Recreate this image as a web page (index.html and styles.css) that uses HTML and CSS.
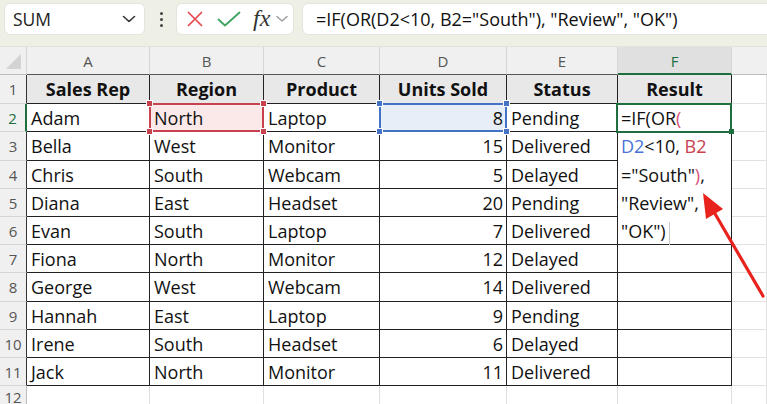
FILE: index.html
```html
<!DOCTYPE html>
<html>
<head>
<meta charset="utf-8">
<title>Sheet</title>
<link rel="stylesheet" href="styles.css">
</head>
<body>
<div class="app">
  <div class="toolbar">
    <div class="namebox">
      <span class="nb-text">SUM</span>
      <svg class="nb-chev" width="14" height="8" viewBox="0 0 14 8"><path d="M1.5 1.5 L7 6.5 L12.5 1.5" fill="none" stroke="#333" stroke-width="1.6" stroke-linecap="round" stroke-linejoin="round"/></svg>
    </div>
    <div class="kebab"><span></span><span></span><span></span></div>
    <div class="fbtns">
      <svg width="16" height="16" viewBox="0 0 16 16"><path d="M1.5 1.5 L14.5 14.5 M14.5 1.5 L1.5 14.5" stroke="#e5484d" stroke-width="1.7" stroke-linecap="round"/></svg>
      <svg width="24" height="16" viewBox="0 0 24 16"><path d="M1.5 8.5 L8 14.5 L22.5 1.5" fill="none" stroke="#3fa35f" stroke-width="1.8" stroke-linecap="round" stroke-linejoin="round"/></svg>
      <span class="fx">fx</span>
      <svg width="12" height="8" viewBox="0 0 12 8"><path d="M1 1.5 L6 6 L11 1.5" fill="none" stroke="#a0a0a0" stroke-width="1.5" stroke-linecap="round" stroke-linejoin="round"/></svg>
    </div>
    <div class="formula">=IF(OR(D2&lt;10, B2="South"), "Review", "OK")</div>
  </div>

  <div class="sheet">
    <div class="corner"></div>
    <div class="ch">A</div><div class="ch">B</div><div class="ch">C</div><div class="ch">D</div><div class="ch">E</div><div class="ch chf">F</div><div class="ch chg"></div>

    <div class="rh tb">1</div>
    <div class="c t hd">Sales Rep</div><div class="c t hd">Region</div><div class="c t hd">Product</div><div class="c t hd">Units Sold</div><div class="c t hd">Status</div><div class="c t hd">Result</div><div class="c"></div>

    <div class="rh tb rh-act">2</div>
    <div class="c t">Adam</div>
    <div class="c t sel sel-red">North<span class="mark"><i class="h tl"></i><i class="h tr"></i><i class="h bl"></i><i class="h br"></i></span></div>
    <div class="c t">Laptop</div>
    <div class="c t num sel sel-blue">8<span class="mark"><i class="h tl"></i><i class="h tr"></i><i class="h bl"></i><i class="h br"></i></span></div>
    <div class="c t">Pending</div>
    <div class="editor">
      <div class="ln l28">=IF(OR<span class="pk">(</span></div>
      <div class="ln l29"><span class="bl">D2</span>&lt;10, <span class="rd">B2</span></div>
      <div class="ln l28">="South"<span class="pk">)</span>,</div>
      <div class="ln l28">"Review",</div>
      <div class="ln l28">"OK")<span class="caret"></span></div>
      <span class="active"><i class="fill-h"></i></span>
    </div>
    <div class="c"></div>

    <div class="rh tb">3</div>
    <div class="c t">Bella</div><div class="c t">West</div><div class="c t">Monitor</div><div class="c t num">15</div><div class="c t">Delivered</div><div class="c"></div>

    <div class="rh tb">4</div>
    <div class="c t">Chris</div><div class="c t">South</div><div class="c t">Webcam</div><div class="c t num">5</div><div class="c t">Delayed</div><div class="c"></div>

    <div class="rh tb">5</div>
    <div class="c t">Diana</div><div class="c t">East</div><div class="c t">Headset</div><div class="c t num">20</div><div class="c t">Pending</div><div class="c"></div>

    <div class="rh tb">6</div>
    <div class="c t">Evan</div><div class="c t">South</div><div class="c t">Laptop</div><div class="c t num">7</div><div class="c t">Delivered</div><div class="c"></div>

    <div class="rh tb">7</div>
    <div class="c t">Fiona</div><div class="c t">North</div><div class="c t">Monitor</div><div class="c t num">12</div><div class="c t">Delayed</div><div class="c t"></div><div class="c"></div>

    <div class="rh tb">8</div>
    <div class="c t">George</div><div class="c t">West</div><div class="c t">Webcam</div><div class="c t num">14</div><div class="c t">Delivered</div><div class="c t"></div><div class="c"></div>

    <div class="rh tb">9</div>
    <div class="c t">Hannah</div><div class="c t">East</div><div class="c t">Laptop</div><div class="c t num">9</div><div class="c t">Pending</div><div class="c t"></div><div class="c"></div>

    <div class="rh tb">10</div>
    <div class="c t">Irene</div><div class="c t">South</div><div class="c t">Headset</div><div class="c t num">6</div><div class="c t">Delayed</div><div class="c t"></div><div class="c"></div>

    <div class="rh tb">11</div>
    <div class="c t">Jack</div><div class="c t">North</div><div class="c t">Monitor</div><div class="c t num">11</div><div class="c t">Delivered</div><div class="c t"></div><div class="c"></div>

    <div class="rh rh12">12</div>
    <div class="c"></div><div class="c"></div><div class="c"></div><div class="c"></div><div class="c"></div><div class="c"></div><div class="c"></div>
  </div>

  <svg class="arrow" width="767" height="404" viewBox="0 0 767 404">
    <line x1="763" y1="296" x2="714" y2="212" stroke="#e8231e" stroke-width="3.2" stroke-linecap="round"/>
    <polygon points="703,193 723,209 706,219" fill="#e8231e"/>
  </svg>
</div>
</body>
</html>
```

FILE: styles.css
```css
* { box-sizing: border-box; }
html, body { margin: 0; padding: 0; }
body { background: #fff; overflow: hidden; font-family: "Open Sans", "Liberation Sans", sans-serif; }

.app { position: relative; width: 767px; height: 404px; overflow: hidden; }

/* ---------- toolbar ---------- */
.toolbar {
  height: 47px;
  background: #eef0e5;
  display: flex;
  align-items: flex-start;
  padding: 3px 0 0 4px;
  border-bottom: 1px solid #e2e4d8;
}
.namebox {
  flex: none;
  width: 141px; height: 32px;
  background: #fff;
  border: 1px solid #e3e4dc;
  border-radius: 6px;
  display: flex; align-items: center; justify-content: space-between;
  padding: 0 8px 0 8px;
}
.nb-text { font-size: 17.5px; color: #222; }
.kebab {
  flex: none;
  width: 31px; height: 32px;
  display: flex; flex-direction: column; align-items: center; justify-content: center; gap: 3px;
  padding-left: 2px;
}
.kebab span { width: 3px; height: 3px; border-radius: 50%; background: #444; }
.fbtns {
  flex: none;
  width: 118px; height: 32px;
  background: #fff;
  border: 1px solid #e3e4dc;
  border-radius: 6px;
  display: flex; align-items: center;
  padding: 0 0 0 10px;
}
.fbtns svg:nth-child(1) { margin-right: 14px; }
.fbtns svg:nth-child(2) { margin-right: 12px; }
.fx { font-family: "Liberation Serif", serif; font-style: italic; font-size: 24px; color: #333; line-height: 1; margin-right: 6px; margin-top: -3px; }
.formula {
  flex: none;
  margin-left: 8px;
  width: 480px; height: 32px;
  background: #fff;
  border: 1px solid #e3e4dc;
  border-radius: 6px;
  display: flex; align-items: center;
  padding-left: 13px;
  font-size: 18px; color: #111;
  white-space: nowrap;
}

/* ---------- sheet ---------- */
.sheet {
  display: grid;
  grid-template-columns: 27px 123px 114px 116px 127px 111px 114px 1fr;
  grid-template-rows: 28px 29px 28px 29px 28px 28px 28px 28px 29px 28px 28px 28px 1fr;
  height: 357px;
  font-size: 18px;
  color: #111;
}
.corner {
  background: #f0f0f0;
  border-right: 1px solid #d5d5d5;
  border-bottom: 1px solid #bdbdbd;
  position: relative;
}
.corner::after {
  content: ""; position: absolute; right: 5px; bottom: 5px;
  width: 0; height: 0;
  border-left: 15px solid transparent;
  border-bottom: 15px solid #d3d3d3;
}
.ch {
  background: #f0f0f0;
  border-right: 1px solid #d5d5d5;
  border-bottom: 1px solid #555;
  display: flex; align-items: center; justify-content: center;
  font-size: 15px; color: #555;
  padding-top: 1px;
}
.chf { background: #e0e0e0; color: #1e6e3e; border-bottom: 2px solid #1e6e3e; }
.chg { border-bottom-color: #bdbdbd; border-right: none; }
.rh {
  background: #f0f0f0;
  border-right: 1px solid #bdbdbd;
  border-bottom: 1px solid #d5d5d5;
  display: flex; align-items: center; justify-content: center;
  font-size: 15px; color: #555;
}
.rh.tb { border-right-color: #333; }
.rh-act { color: #1e6e3e; border-right: 2px solid #1e6e3e !important; }
.rh12 { align-items: flex-start; padding-top: 1px; }

.c {
  border-right: 1px solid #e1e1e1;
  border-bottom: 1px solid #e1e1e1;
  display: flex; align-items: center;
  padding: 0 4px;
  white-space: nowrap;
  overflow: hidden;
}
.c.t { border-right-color: #222; border-bottom-color: #222; }
.hd { background: #e8e8e8; font-weight: 700; justify-content: center; }
.num { justify-content: flex-end; padding-right: 3px; }

/* selection marks */
.sel { position: relative; overflow: visible; }
.sel-red { background: #fbe9ea; }
.sel-blue { background: #e8eef8; }
.mark { position: absolute; left: -1px; top: -1px; right: -1px; bottom: -1px; border: 2px solid; }
.sel-red .mark { border-color: #c8414f; }
.sel-blue .mark { border-color: #4472c4; }
.h { position: absolute; width: 7px; height: 7px; border: 1px solid #fff; }
.sel-red .h { background: #c8414f; }
.sel-blue .h { background: #4472c4; }
.h.tl { left: -5px; top: -5px; }
.h.tr { right: -5px; top: -5px; }
.h.bl { left: -5px; bottom: -5px; }
.h.br { right: -5px; bottom: -5px; }

/* in-cell editor */
.editor {
  grid-column: 7;
  grid-row: 3 / span 5;
  position: relative;
  background: #fff;
  border-right: 1px solid #222;
  border-bottom: 1px solid #222;
  padding-left: 3px;
  white-space: nowrap;
}
.ln { display: block; }
.l28 { height: 28px; line-height: 28px; }
.l29 { height: 29px; line-height: 29px; }
.pk { color: #d6557a; }
.bl { color: #4a72d8; }
.rd { color: #c9404e; }
.caret { display: inline-block; width: 1px; height: 23px; background: #c8c8c8; margin-left: 3px; vertical-align: middle; }
.active {
  position: absolute; left: -2px; top: -1px; width: 116px; height: 30px;
  border: 2px solid #1e6e3e;
}
.fill-h { position: absolute; right: -4px; bottom: -3px; width: 5px; height: 5px; background: #1e6e3e; }

.arrow { position: absolute; left: 0; top: 0; pointer-events: none; }
```
